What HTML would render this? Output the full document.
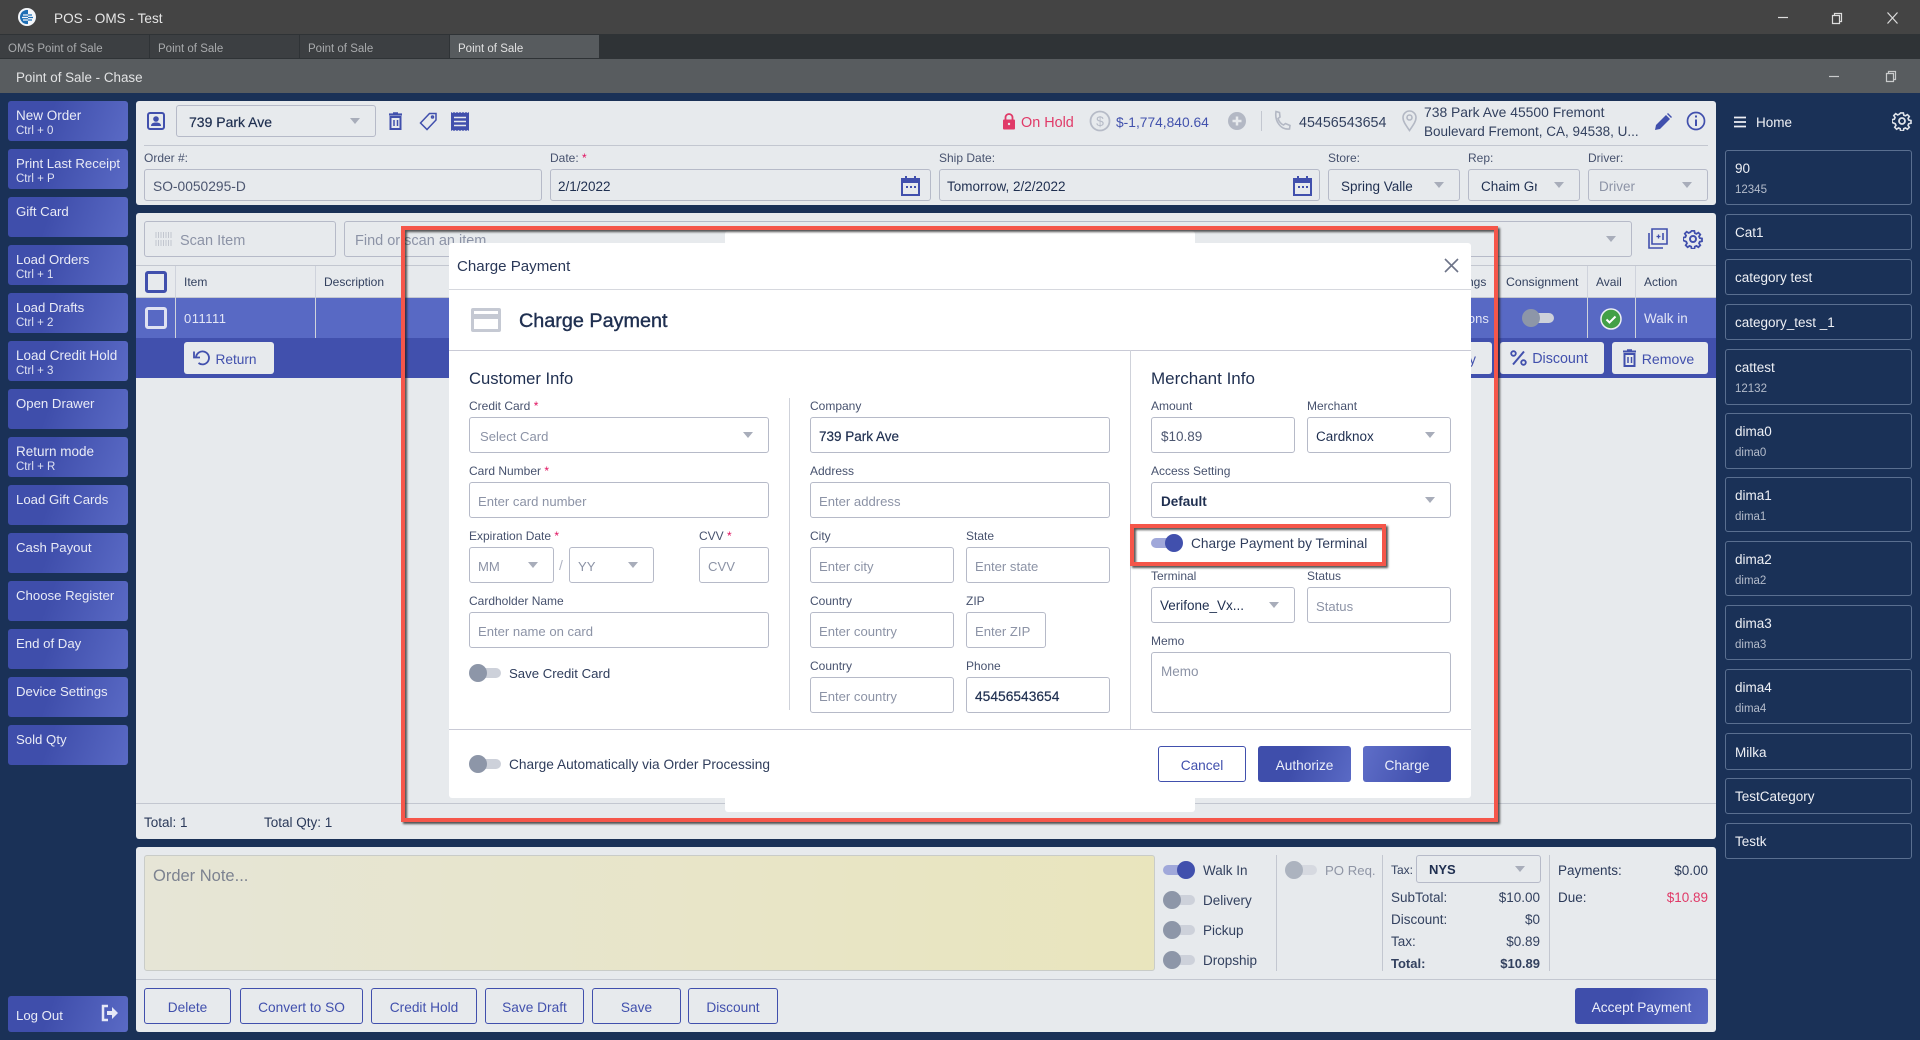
<!DOCTYPE html>
<html><head><meta charset="utf-8"><title>POS - OMS - Test</title>
<style>
html,body{margin:0;padding:0}
body{width:1920px;height:1040px;position:relative;overflow:hidden;background:#1a3157;font-family:"Liberation Sans",sans-serif;font-size:13px;color:#1f2f50}
.a,.l,.b,.s,.t,.c,.btn,.o,svg{position:absolute}
.a{white-space:nowrap;line-height:22px}
.l{white-space:nowrap;line-height:18px;color:#47526e;font-size:12px}
.l i{color:#e0115f;font-style:normal}
.b{box-sizing:border-box;border:1px solid #b6bac8;border-radius:3px;display:flex;align-items:center;padding-left:8px;padding-top:2px;white-space:nowrap;color:#8c93a6;font-size:13.1px;background:#fff;overflow:hidden}
.g{background:transparent}
.v{color:#1f2f50}
.ar:after{content:"";position:absolute;right:15px;top:50%;margin-top:-3px;border-left:5px solid transparent;border-right:5px solid transparent;border-top:6px solid #a8adba}
.s{left:8px;width:120px;height:40px;border-radius:3px;background:linear-gradient(110deg,#3f4eab 35%,#5a6ac5);color:#e9ebf6;box-sizing:border-box;padding:6px 0 0 8px;font-size:13.5px;line-height:18px;white-space:nowrap}
.s small{display:block;font-size:11.5px;line-height:12px;color:#dfe2f2}
.t{width:32px;height:18px}
.t:before{content:"";position:absolute;left:3px;right:0;top:4px;height:10px;border-radius:5px;background:#cdd1da}
.t:after{content:"";position:absolute;left:0;top:0;width:18px;height:18px;border-radius:50%;background:#8d96a8}
.t.on:before{background:#a0a8da;left:0;right:3px}
.t.on:after{left:14px;background:#4150ad}
.c{left:1725px;width:187px;box-sizing:border-box;border:1px solid #5a6f90;border-radius:3px;color:#eef0f5;padding:2px 0 0 9px;font-size:13.5px;display:flex;flex-direction:column;justify-content:center;line-height:18px}
.c small{font-size:11.5px;color:#b4bccb;line-height:16px;margin-top:4px}
.btn{box-sizing:border-box;height:36px;border:1px solid #4150ad;border-radius:3px;color:#4150ad;display:flex;align-items:center;justify-content:center;font-size:13.7px;white-space:nowrap;padding-top:2px}
.pr{background:linear-gradient(110deg,#3f4eab 40%,#5a6ac5);color:#eef0fa;border:0}
.o{box-sizing:border-box;border:4px solid #f5564a;box-shadow:2px 2px 2px rgba(30,30,30,.75),inset 2px 2px 2px rgba(30,30,30,.75)}
.p{position:absolute;background:#e7eaed;border-radius:3px}
.h{position:absolute;background:#c3c7d0}
.lt{left:1391px;color:#33415f;font-size:13.5px}
.rt{left:1440px;width:100px;text-align:right;color:#33415f;font-size:13.5px}
</style></head><body>

<!-- window chrome -->
<div class="a" style="left:0;top:0;width:1920px;height:34px;background:#444"></div>
<svg style="left:18px;top:8px" width="18" height="18" viewBox="0 0 18 18"><circle cx="9" cy="9" r="9" fill="#f4f6fa"/><path d="M10 2a7 7 0 0 0 0 14c-2-2-3-4-3-7s1-5 3-7z" fill="#1f6fb5"/><path d="M2 9a7 7 0 0 1 8-7v14a7 7 0 0 1-8-7z" fill="#1f6fb5"/><path d="M5 7h5M4 9.500h6M5 12h5" stroke="#f4f6fa" stroke-width="1.200"/><path d="M10 7h4M10 9.500h5M10 12h4" stroke="#1f6fb5" stroke-width="1.200"/></svg>
<div class="a" style="left:54px;top:8px;color:#e6e6e6;font-size:13.6px">POS - OMS - Test</div>
<svg style="left:1770px;top:8px" width="140" height="20" viewBox="0 0 140 20" fill="none" stroke="#ddd" stroke-width="1.2"><path d="M8 9.500h10"/><path d="M62.500 7.500h7v8h-7zM64.500 7.500v-2h7v8h-2"/><path d="M117.500 4.500l10 11M127.500 4.500l-10 11"/></svg>
<div class="a" style="left:0;top:34px;width:1920px;height:25px;background:#2f3336"></div>
<div class="a" style="left:0;top:35px;width:149px;height:23px;background:#3c3f42;color:#a9abad;font-size:11.500px;line-height:28px;text-indent:8px;overflow:hidden">OMS Point of Sale</div>
<div class="a" style="left:150px;top:35px;width:149px;height:23px;background:#3c3f42;color:#a9abad;font-size:11.500px;line-height:28px;text-indent:8px;overflow:hidden">Point of Sale</div>
<div class="a" style="left:300px;top:35px;width:149px;height:23px;background:#3c3f42;color:#a9abad;font-size:11.500px;line-height:28px;text-indent:8px;overflow:hidden">Point of Sale</div>
<div class="a" style="left:450px;top:35px;width:149px;height:23px;background:#575b5e;color:#e2e2e2;font-size:11.500px;line-height:28px;text-indent:8px;overflow:hidden">Point of Sale</div>
<div class="a" style="left:0;top:59px;width:1920px;height:34px;background:#585c5f"></div>
<div class="a" style="left:16px;top:67px;color:#e2e3e4;font-size:13.400px">Point of Sale - Chase</div>
<svg style="left:1825px;top:66px" width="80" height="20" viewBox="0 0 80 20" fill="none" stroke="#c9cbcc" stroke-width="1.2"><path d="M4 10.500h10"/><path d="M61.500 7.500h7v8h-7zM63.500 7.500v-2h7v8h-2"/></svg>

<!-- left sidebar -->
<div class="s" style="top:101px">New Order<small>Ctrl + 0</small></div>
<div class="s" style="top:149px;font-size:13.2px">Print Last Receipt<small>Ctrl + P</small></div>
<div class="s" style="top:197px;font-size:13.2px">Gift Card</div>
<div class="s" style="top:245px;font-size:13.2px">Load Orders<small>Ctrl + 1</small></div>
<div class="s" style="top:293px;font-size:13.2px">Load Drafts<small>Ctrl + 2</small></div>
<div class="s" style="top:341px">Load Credit Hold<small>Ctrl + 3</small></div>
<div class="s" style="top:389px;font-size:13.2px">Open Drawer</div>
<div class="s" style="top:437px">Return mode<small>Ctrl + R</small></div>
<div class="s" style="top:485px;font-size:13.2px">Load Gift Cards</div>
<div class="s" style="top:533px;font-size:13.2px">Cash Payout</div>
<div class="s" style="top:581px;font-size:13.2px">Choose Register</div>
<div class="s" style="top:629px;font-size:13.2px">End of Day</div>
<div class="s" style="top:677px;font-size:13.2px">Device Settings</div>
<div class="s" style="top:725px;font-size:13.2px">Sold Qty</div>
<div class="s" style="top:996px;height:36px;padding-top:11px;font-size:13.2px">Log Out</div>
<svg style="left:101px;top:1004px" width="18" height="18" viewBox="0 0 18 18" fill="none"><path d="M7 2H2v14h5" stroke="#e6e8f6" stroke-width="2.500"/><path d="M6 7h5V3l6 6-6 6v-4H6z" fill="#e6e8f6"/></svg>

<!-- top panel -->
<div class="p" style="left:136px;top:101px;width:1580px;height:104px"></div>
<svg style="left:147px;top:112px" width="18" height="18" viewBox="0 0 18 18"><rect x="1" y="1" width="16" height="16" rx="2" fill="none" stroke="#4150ad" stroke-width="2"/><circle cx="9" cy="7" r="2.800" fill="#4150ad"/><path d="M4 14c0-3 2.500-3.500 5-3.500s5 .5 5 3.500z" fill="#4150ad"/></svg>
<div class="b g v ar" style="left:176px;top:105px;width:200px;height:32px;padding-left:12px;font-size:14px;-webkit-text-stroke:.2px #1f2f50">739 Park Ave</div>
<svg style="left:388px;top:112px" width="15" height="18" viewBox="0 0 15 18" fill="none" stroke="#4150ad"><path d="M1 2.500h13" stroke-width="2.200"/><path d="M5 1h5" stroke-width="1.500"/><rect x="2.500" y="5" width="10" height="12" stroke-width="2"/><path d="M6 8v6M9.500 8v6" stroke-width="1.500"/></svg>
<svg style="left:419px;top:112px" width="19" height="19" viewBox="0 0 19 19" fill="none" stroke="#4150ad" stroke-width="1.500"><path d="M10.500 1.500h6.500v6.500L8 17.500 1.500 11z"/><circle cx="13.500" cy="5" r="1"/></svg>
<svg style="left:451px;top:112px" width="18" height="19" viewBox="0 0 18 19"><path d="M0 0l1.500 1L3 0l1.500 1L6 0l1.500 1L9 0l1.500 1L12 0l1.500 1L15 0l1.500 1L18 0v19l-1.500-1-1.500 1-1.500-1-1.500 1-1.500-1L9 19l-1.500-1L6 19l-1.500-1L3 19l-1.500-1L0 19z" fill="#4150ad"/><path d="M3 5.500h12M3 9.500h12M3 13.500h12" stroke="#e7eaed" stroke-width="1.500"/></svg>

<svg style="left:1002px;top:113px" width="14" height="17" viewBox="0 0 14 17"><rect x="1" y="6.500" width="12" height="10" rx="1" fill="#e03a68"/><path d="M3.500 6.500V4.500a3.500 3.500 0 0 1 7 0v2" fill="none" stroke="#e03a68" stroke-width="1.800"/><circle cx="7" cy="11" r="1.200" fill="#e7eaed"/></svg>
<div class="a" style="left:1021px;top:112px;color:#e03a68;font-size:14.4px">On Hold</div>
<svg style="left:1089px;top:110px" width="22" height="22" viewBox="0 0 22 22"><circle cx="11" cy="11" r="9.500" fill="none" stroke="#b6bbc7" stroke-width="1.800"/><text x="11" y="16" text-anchor="middle" font-size="14" fill="#b6bbc7" font-family="Liberation Sans">$</text></svg>
<div class="a" style="left:1116px;top:112px;color:#4252ad;font-size:13.8px">$-1,774,840.64</div>
<svg style="left:1228px;top:112px" width="18" height="18" viewBox="0 0 18 18"><circle cx="9" cy="9" r="9" fill="#b3b8c4"/><path d="M9 4.500v9M4.500 9h9" stroke="#e7eaed" stroke-width="2.500"/></svg>
<div class="h" style="left:1261px;top:111px;width:1px;height:20px"></div>
<svg style="left:1273px;top:110px" width="19" height="21" viewBox="0 0 19 21" fill="none" stroke="#b3b8c4" stroke-width="1.600"><path d="M3 1.500l3.500 1 .5 4.500-2 1.500c1 3 3 5.500 5.500 6.500l2-1.500 4.500 2-.5 3.500c-9 1-15-8-13.500-17.500z"/></svg>
<div class="a" style="left:1299px;top:112px;color:#33415f;font-size:14.3px">45456543654</div>
<svg style="left:1402px;top:110px" width="15" height="22" viewBox="0 0 15 22" fill="none" stroke="#b3b8c4" stroke-width="1.600"><path d="M7.500 20.500C3 14 1 11 1 7.500a6.500 6.500 0 0 1 13 0c0 3.500-2 6.500-6.500 13z"/><circle cx="7.500" cy="7.500" r="2.500"/></svg>
<div class="a" style="left:1424px;top:101px;color:#33415f;font-size:13.9px">738 Park Ave 45500 Fremont</div>
<div class="a" style="left:1424px;top:121px;color:#33415f;font-size:13.5px">Boulevard Fremont, CA, 94538, U...</div>
<svg style="left:1655px;top:113px" width="17" height="17" viewBox="0 0 17 17"><path d="M0 17l1-5L11 2l4 4L5 16zM12 1l1-1 4 4-1 1z" fill="#4150ad"/></svg>
<svg style="left:1686px;top:111px" width="20" height="20" viewBox="0 0 20 20" fill="none" stroke="#4150ad"><circle cx="10" cy="10" r="8.500" stroke-width="1.700"/><path d="M10 8.500v6.500" stroke-width="2"/><path d="M10 4.500v2" stroke-width="2"/></svg>
<svg style="left:1892px;top:111px" width="20" height="20" viewBox="0 0 20 20" fill="none" stroke="#dfe3ea" stroke-width="1.800"><circle cx="10" cy="10" r="3"/><path d="M8.500 1h3l.5 2.500 1.800.8 2.200-1.400 2.100 2.100-1.400 2.200.8 1.800 2.500.5v3l-2.500.5-.8 1.800 1.400 2.200-2.100 2.100-2.200-1.400-1.800.8-.5 2.500h-3l-.5-2.500-1.800-.8-2.200 1.400-2.100-2.100 1.400-2.200-.8-1.800L-1 11.500v-3l2.500-.5.800-1.800L.9 4l2.100-2.100 2.200 1.400L7 2.500z" transform="translate(1 1) scale(.9)"/></svg>

<div class="h" style="left:144px;top:145px;width:1564px;height:1px"></div>
<div class="l" style="left:144px;top:149px">Order #:</div>
<div class="b g" style="left:144px;top:169px;width:398px;height:32px;color:#4c5670;font-size:13.8px">SO-0050295-D</div>
<div class="l" style="left:550px;top:149px">Date: <i>*</i></div>
<div class="b g v" style="left:550px;top:169px;width:381px;height:32px;padding-left:7px;font-size:13.500px">2/1/2022</div>
<svg style="left:901px;top:176px" width="19" height="20" viewBox="0 0 19 20"><path d="M1 3h17v16H1z" fill="none" stroke="#4150ad" stroke-width="2"/><path d="M1 3h17v4H1z" fill="#4150ad"/><path d="M5 0v4M14 0v4" stroke="#4150ad" stroke-width="2"/><path d="M5 11h2M9 11h2M13 11h2" stroke="#4150ad" stroke-width="2"/></svg>
<div class="l" style="left:939px;top:149px">Ship Date:</div>
<div class="b g v" style="left:939px;top:169px;width:381px;height:32px;padding-left:7px;font-size:13.500px">Tomorrow, 2/2/2022</div>
<svg style="left:1293px;top:176px" width="19" height="20" viewBox="0 0 19 20"><path d="M1 3h17v16H1z" fill="none" stroke="#4150ad" stroke-width="2"/><path d="M1 3h17v4H1z" fill="#4150ad"/><path d="M5 0v4M14 0v4" stroke="#4150ad" stroke-width="2"/><path d="M5 11h2M9 11h2M13 11h2" stroke="#4150ad" stroke-width="2"/></svg>
<div class="l" style="left:1328px;top:149px">Store:</div>
<div class="b g v ar" style="left:1328px;top:169px;width:132px;height:32px;padding-left:12px;font-size:13.5px"><span style="display:block;width:72px;overflow:hidden">Spring Valley</span></div>
<div class="l" style="left:1468px;top:149px">Rep:</div>
<div class="b g v ar" style="left:1468px;top:169px;width:112px;height:32px;padding-left:12px;font-size:13.5px"><span style="display:block;width:56px;overflow:hidden">Chaim Gross</span></div>
<div class="l" style="left:1588px;top:149px">Driver:</div>
<div class="b g ar" style="left:1588px;top:169px;width:120px;height:32px;padding-left:10px;font-size:13.5px">Driver</div>

<!-- middle panel -->
<div class="p" style="left:136px;top:213px;width:1580px;height:626px"></div>
<div class="b g" style="left:144px;top:221px;width:192px;height:36px;padding-left:35px;padding-top:3px;font-size:14.5px">Scan Item</div>
<svg style="left:155px;top:232px" width="17" height="14" viewBox="0 0 17 14" stroke="#c2c6cf" fill="none"><path d="M1 0v6M3.500 0v6M6 0v6M8.500 0v6M11 0v6M13.500 0v6M16 0v6M1 8v6M3.500 8v6M6 8v6M8.500 8v6M11 8v6M13.500 8v6M16 8v6"/></svg>
<div class="b g ar" style="left:344px;top:221px;width:1288px;height:36px;padding-left:10px;padding-top:3px;font-size:14.5px">Find or scan an item</div>
<svg style="left:1647px;top:228px" width="21" height="22" viewBox="0 0 21 22" fill="none" stroke="#4150ad" stroke-width="1.600"><path d="M5 1h15v15H5z"/><path d="M2 5v15h14"/><path d="M9.500 8.500h4M11.500 6.500v4" stroke-width="1.300"/><path d="M16 5v7" stroke-width="1.600"/></svg>
<svg style="left:1683px;top:229px" width="20" height="20" viewBox="0 0 20 20" fill="none" stroke="#4150ad" stroke-width="2"><circle cx="10" cy="10" r="3"/><path d="M8.500 1h3l.5 2.500 1.800.8 2.200-1.400 2.100 2.100-1.400 2.200.8 1.800 2.500.5v3l-2.500.5-.8 1.800 1.400 2.200-2.100 2.100-2.200-1.400-1.800.8-.5 2.500h-3l-.5-2.500-1.800-.8-2.200 1.400-2.100-2.100 1.400-2.200-.8-1.800L-1 11.500v-3l2.500-.5.800-1.800L.9 4l2.100-2.100 2.200 1.400L7 2.500z" transform="translate(1 1) scale(.9)"/></svg>

<div class="h" style="left:136px;top:265px;width:1580px;height:1px"></div>
<div class="h" style="left:136px;top:297px;width:1580px;height:1px"></div>
<div class="a" style="left:136px;top:298px;width:1580px;height:40px;background:#5869c4"></div>
<div class="a" style="left:136px;top:338px;width:1580px;height:40px;background:#4150ad"></div>
<div class="a" style="left:175px;top:266px;width:1px;height:72px;background:#cfd3dc"></div>
<div class="a" style="left:315px;top:266px;width:1px;height:72px;background:#cfd3dc"></div>
<div class="a" style="left:1587px;top:266px;width:1px;height:72px;background:#cfd3dc"></div>
<div class="a" style="left:1635px;top:266px;width:1px;height:72px;background:#cfd3dc"></div>
<div class="a" style="left:1496px;top:266px;width:1px;height:72px;background:#cfd3dc"></div>
<div class="a" style="left:145px;top:271px;width:22px;height:22px;box-sizing:border-box;border:3px solid #4150ad;border-radius:3px"></div>
<div class="a" style="left:145px;top:307px;width:22px;height:22px;box-sizing:border-box;border:3px solid #dfe2f2;border-radius:3px"></div>
<div class="a" style="left:184px;top:271px;color:#33415f;font-size:12px">Item</div>
<div class="a" style="left:324px;top:271px;color:#33415f;font-size:12px">Description</div>
<div class="a" style="left:1467px;top:271px;color:#33415f;font-size:12px">ngs</div>
<div class="a" style="left:1506px;top:271px;color:#33415f;font-size:12.3px">Consignment</div>
<div class="a" style="left:1596px;top:271px;color:#33415f;font-size:12px">Avail</div>
<div class="a" style="left:1644px;top:271px;color:#33415f;font-size:12px">Action</div>
<div class="a" style="left:184px;top:308px;color:#e3e6f6;font-size:13px;letter-spacing:.5px">011111</div>
<div class="a" style="left:1465px;top:308px;color:#e3e6f6;font-size:13px">ions</div>
<div class="t" style="left:1522px;top:309px"></div>
<svg style="left:1600px;top:308px" width="22" height="22" viewBox="0 0 22 22"><circle cx="11" cy="11" r="10" fill="#43a047" stroke="#eef0f6" stroke-width="1.500"/><path d="M6.500 11.500l3 3 6-6" fill="none" stroke="#fff" stroke-width="2"/></svg>
<div class="a" style="left:1644px;top:308px;color:#e3e6f6;font-size:13.500px">Walk in</div>

<div class="btn" style="left:184px;top:342px;width:90px;height:32px;background:#e7eaed;border:0;padding-left:14px">Return</div>
<svg style="left:193px;top:349px" width="18" height="17" viewBox="0 0 18 17" fill="none" stroke="#4150ad" stroke-width="1.800"><path d="M3 8.500a6.500 6.500 0 1 1 2.500 5.500"/><path d="M1 2.500v6h6"/></svg>
<div class="btn" style="left:1400px;top:342px;width:92px;height:32px;background:#e7eaed;border:0;justify-content:flex-end;padding-right:16px">Apply</div>
<div class="btn" style="left:1500px;top:342px;width:104px;height:32px;background:#e7eaed;border:0;padding-left:16px;font-size:14.3px">Discount</div>
<svg style="left:1510px;top:350px" width="17" height="16" viewBox="0 0 17 16" fill="none" stroke="#4150ad" stroke-width="1.800"><circle cx="3.500" cy="3.500" r="2.300"/><circle cx="13.500" cy="12.500" r="2.300"/><path d="M14 1.500L3 14.500" stroke-width="2"/></svg>
<div class="btn" style="left:1612px;top:342px;width:96px;height:32px;background:#e7eaed;border:0;padding-left:16px;font-size:14.1px">Remove</div>
<svg style="left:1622px;top:349px" width="15" height="18" viewBox="0 0 15 18" fill="none" stroke="#4150ad"><path d="M1 2.500h13" stroke-width="2"/><path d="M5 1h5" stroke-width="1.500"/><rect x="2.500" y="5" width="10" height="12" stroke-width="2"/><path d="M6 8v6M9.500 8v6" stroke-width="1.500"/></svg>

<div class="h" style="left:136px;top:803px;width:1580px;height:1px"></div>
<div class="a" style="left:144px;top:812px;color:#2b3a5a;font-size:13.500px">Total: 1</div>
<div class="a" style="left:264px;top:812px;color:#2b3a5a;font-size:13.500px">Total Qty: 1</div>

<!-- modal -->
<div class="a" style="left:725px;top:231px;width:470px;height:581px;background:#fff;border-radius:3px"></div>
<div class="a" style="left:449px;top:243px;width:1022px;height:555px;background:#fff;border-radius:3px"></div>
<div class="a" style="left:457px;top:256px;color:#2a3858;font-size:15.1px">Charge Payment</div>
<svg style="left:1444px;top:258px" width="15" height="15" viewBox="0 0 15 15" stroke="#6d7488" stroke-width="1.600"><path d="M1 1l13 13M14 1L1 14"/></svg>
<div class="a" style="left:449px;top:289px;width:1022px;height:1px;background:#d6d8de"></div>
<svg style="left:471px;top:308px" width="30" height="24" viewBox="0 0 30 24"><rect width="30" height="24" rx="2" fill="#c5c9d3"/><rect x="3" y="3" width="24" height="3" fill="#fff"/><rect x="3" y="11" width="24" height="10" fill="#fff"/></svg>
<div class="a" style="left:519px;top:310px;color:#1f2f50;font-size:19.800px;-webkit-text-stroke:.4px #1f2f50">Charge Payment</div>
<div class="a" style="left:449px;top:350px;width:1022px;height:1px;background:#c9cad6"></div>

<div class="a" style="left:469px;top:368px;color:#1f2f50;font-size:16.6px">Customer Info</div>
<div class="l" style="left:469px;top:397px">Credit Card <i>*</i></div>
<div class="b ar" style="left:469px;top:417px;width:300px;height:36px;padding-left:10px">Select Card</div>
<div class="l" style="left:469px;top:462px">Card Number <i>*</i></div>
<div class="b" style="left:469px;top:482px;width:300px;height:36px">Enter card number</div>
<div class="l" style="left:469px;top:527px">Expiration Date <i>*</i></div>
<div class="b ar" style="left:469px;top:547px;width:85px;height:36px">MM</div>
<div class="a" style="left:559px;top:554px;color:#b0b4c2;font-size:14px">/</div>
<div class="b ar" style="left:569px;top:547px;width:85px;height:36px;padding-left:8px">YY</div>
<div class="l" style="left:699px;top:527px">CVV <i>*</i></div>
<div class="b" style="left:699px;top:547px;width:70px;height:36px">CVV</div>
<div class="l" style="left:469px;top:592px">Cardholder Name</div>
<div class="b" style="left:469px;top:612px;width:300px;height:36px">Enter name on card</div>
<div class="t" style="left:469px;top:664px"></div>
<div class="a" style="left:509px;top:663px;color:#2f3d5c;font-size:13.2px">Save Credit Card</div>

<div class="a" style="left:789px;top:398px;width:1px;height:312px;background:#cfd2da"></div>

<div class="l" style="left:810px;top:397px">Company</div>
<div class="b v" style="left:810px;top:417px;width:300px;height:36px;font-size:13.5px;-webkit-text-stroke:.2px #1f2f50">739 Park Ave</div>
<div class="l" style="left:810px;top:462px">Address</div>
<div class="b" style="left:810px;top:482px;width:300px;height:36px">Enter address</div>
<div class="l" style="left:810px;top:527px">City</div>
<div class="b" style="left:810px;top:547px;width:144px;height:36px">Enter city</div>
<div class="l" style="left:966px;top:527px">State</div>
<div class="b" style="left:966px;top:547px;width:144px;height:36px">Enter state</div>
<div class="l" style="left:810px;top:592px">Country</div>
<div class="b" style="left:810px;top:612px;width:144px;height:36px">Enter country</div>
<div class="l" style="left:966px;top:592px">ZIP</div>
<div class="b" style="left:966px;top:612px;width:80px;height:36px">Enter ZIP</div>
<div class="l" style="left:810px;top:657px">Country</div>
<div class="b" style="left:810px;top:677px;width:144px;height:36px">Enter country</div>
<div class="l" style="left:966px;top:657px">Phone</div>
<div class="b v" style="left:966px;top:677px;width:144px;height:36px;font-size:13.8px;-webkit-text-stroke:.2px #1f2f50">45456543654</div>

<div class="a" style="left:1130px;top:350px;width:1px;height:379px;background:#cfd2da"></div>

<div class="a" style="left:1151px;top:368px;color:#1f2f50;font-size:17px">Merchant Info</div>
<div class="l" style="left:1151px;top:397px">Amount</div>
<div class="b" style="left:1151px;top:417px;width:144px;height:36px;color:#4c5670;padding-left:9px;font-size:13.5px">$10.89</div>
<div class="l" style="left:1307px;top:397px">Merchant</div>
<div class="b v ar" style="left:1307px;top:417px;width:144px;height:36px;font-size:13.5px">Cardknox</div>
<div class="l" style="left:1151px;top:462px">Access Setting</div>
<div class="b v ar" style="left:1151px;top:482px;width:300px;height:36px;padding-left:9px;font-weight:bold;font-size:13.5px">Default</div>
<div class="t on" style="left:1151px;top:534px"></div>
<div class="a" style="left:1191px;top:533px;color:#2f3d5c;font-size:13.7px">Charge Payment by Terminal</div>
<div class="l" style="left:1151px;top:567px">Terminal</div>
<div class="b v ar" style="left:1151px;top:587px;width:144px;height:36px;font-size:13.5px;padding-top:0">Verifone_Vx...</div>
<div class="l" style="left:1307px;top:567px">Status</div>
<div class="b" style="left:1307px;top:587px;width:144px;height:36px">Status</div>
<div class="l" style="left:1151px;top:632px">Memo</div>
<div class="b" style="left:1151px;top:652px;width:300px;height:61px;align-items:flex-start;padding-top:11px;padding-left:9px;font-size:13.5px">Memo</div>

<div class="a" style="left:449px;top:729px;width:1022px;height:1px;background:#c9cad6"></div>
<div class="t" style="left:469px;top:755px"></div>
<div class="a" style="left:509px;top:754px;color:#2f3d5c;font-size:13.7px">Charge Automatically via Order Processing</div>
<div class="btn" style="left:1158px;top:746px;width:88px">Cancel</div>
<div class="btn pr" style="left:1258px;top:746px;width:93px">Authorize</div>
<div class="btn pr" style="left:1363px;top:746px;width:88px;background:linear-gradient(110deg,#5f6ec8,#4150ad 70%)">Charge</div>

<!-- annotations -->
<div class="o" style="left:401px;top:226px;width:1097px;height:596px"></div>
<div class="o" style="left:1130px;top:524px;width:256px;height:42px"></div>

<!-- bottom panel -->
<div class="p" style="left:136px;top:847px;width:1580px;height:185px"></div>
<div class="a" style="left:144px;top:855px;width:1011px;height:116px;box-sizing:border-box;border:1px solid #c9ccc8;border-radius:3px;background:linear-gradient(90deg,#e6e5d6,#e9e5bd);color:#7c8290;font-size:16.5px;padding:10px 8px;line-height:20px">Order Note...</div>
<div class="t on" style="left:1163px;top:861px"></div>
<div class="a" style="left:1203px;top:860px;color:#33415f;font-size:13.500px">Walk In</div>
<div class="t" style="left:1163px;top:891px"></div>
<div class="a" style="left:1203px;top:890px;color:#33415f;font-size:13.500px">Delivery</div>
<div class="t" style="left:1163px;top:921px"></div>
<div class="a" style="left:1203px;top:920px;color:#33415f;font-size:13.500px">Pickup</div>
<div class="t" style="left:1163px;top:951px"></div>
<div class="a" style="left:1203px;top:950px;color:#33415f;font-size:13.500px">Dropship</div>
<div class="h" style="left:1276px;top:855px;width:1px;height:116px"></div>
<div class="t" style="left:1285px;top:861px;opacity:.65"></div>
<div class="a" style="left:1325px;top:860px;color:#8f95a5;font-size:13.200px">PO Req.</div>
<div class="h" style="left:1382px;top:855px;width:1px;height:116px"></div>
<div class="a" style="left:1391px;top:859px;color:#33415f;font-size:12px">Tax:</div>
<div class="b g v ar" style="left:1416px;top:855px;width:125px;height:28px;padding-left:12px;padding-top:0;font-size:13px;font-weight:bold">NYS</div>
<div class="a lt" style="top:887px">SubTotal:</div><div class="a rt" style="top:887px">$10.00</div>
<div class="a lt" style="top:909px">Discount:</div><div class="a rt" style="top:909px">$0</div>
<div class="a lt" style="top:931px">Tax:</div><div class="a rt" style="top:931px">$0.89</div>
<div class="a lt" style="top:953px;font-weight:bold;font-size:13px">Total:</div><div class="a rt" style="top:953px;font-weight:bold;font-size:13px">$10.89</div>
<div class="h" style="left:1549px;top:855px;width:1px;height:116px"></div>
<div class="a" style="left:1558px;top:860px;color:#2b3a5a;font-size:13.500px">Payments:</div>
<div class="a" style="left:1608px;top:860px;width:100px;text-align:right;color:#2b3a5a;font-size:13.500px">$0.00</div>
<div class="a" style="left:1558px;top:887px;color:#2b3a5a;font-size:13.500px">Due:</div>
<div class="a" style="left:1608px;top:887px;width:100px;text-align:right;color:#e03a68;font-size:13.500px">$10.89</div>
<div class="h" style="left:136px;top:979px;width:1580px;height:1px"></div>
<div class="btn" style="left:144px;top:988px;width:87px">Delete</div>
<div class="btn" style="left:240px;top:988px;width:123px">Convert to SO</div>
<div class="btn" style="left:371px;top:988px;width:106px">Credit Hold</div>
<div class="btn" style="left:485px;top:988px;width:99px">Save Draft</div>
<div class="btn" style="left:592px;top:988px;width:89px">Save</div>
<div class="btn" style="left:688px;top:988px;width:90px">Discount</div>
<div class="btn pr" style="left:1575px;top:988px;width:133px">Accept Payment</div>

<!-- right sidebar -->
<svg style="left:1734px;top:116px" width="12" height="12" viewBox="0 0 12 12" stroke="#eef0f5" stroke-width="1.800"><path d="M0 1.500h12M0 6h12M0 10.500h12"/></svg>
<div class="a" style="left:1756px;top:112px;color:#eef0f5;font-size:13.500px">Home</div>
<div class="c" style="top:150px;height:55px">90<small>12345</small></div>
<div class="c" style="top:214px;height:36px">Cat1</div>
<div class="c" style="top:259px;height:36px">category test</div>
<div class="c" style="top:304px;height:36px">category_test _1</div>
<div class="c" style="top:349px;height:56px">cattest<small>12132</small></div>
<div class="c" style="top:413px;height:56px">dima0<small>dima0</small></div>
<div class="c" style="top:477px;height:55px">dima1<small>dima1</small></div>
<div class="c" style="top:541px;height:55px">dima2<small>dima2</small></div>
<div class="c" style="top:605px;height:55px">dima3<small>dima3</small></div>
<div class="c" style="top:669px;height:55px">dima4<small>dima4</small></div>
<div class="c" style="top:733px;height:37px">Milka</div>
<div class="c" style="top:778px;height:36px">TestCategory</div>
<div class="c" style="top:823px;height:36px">Testk</div>
</body></html>
